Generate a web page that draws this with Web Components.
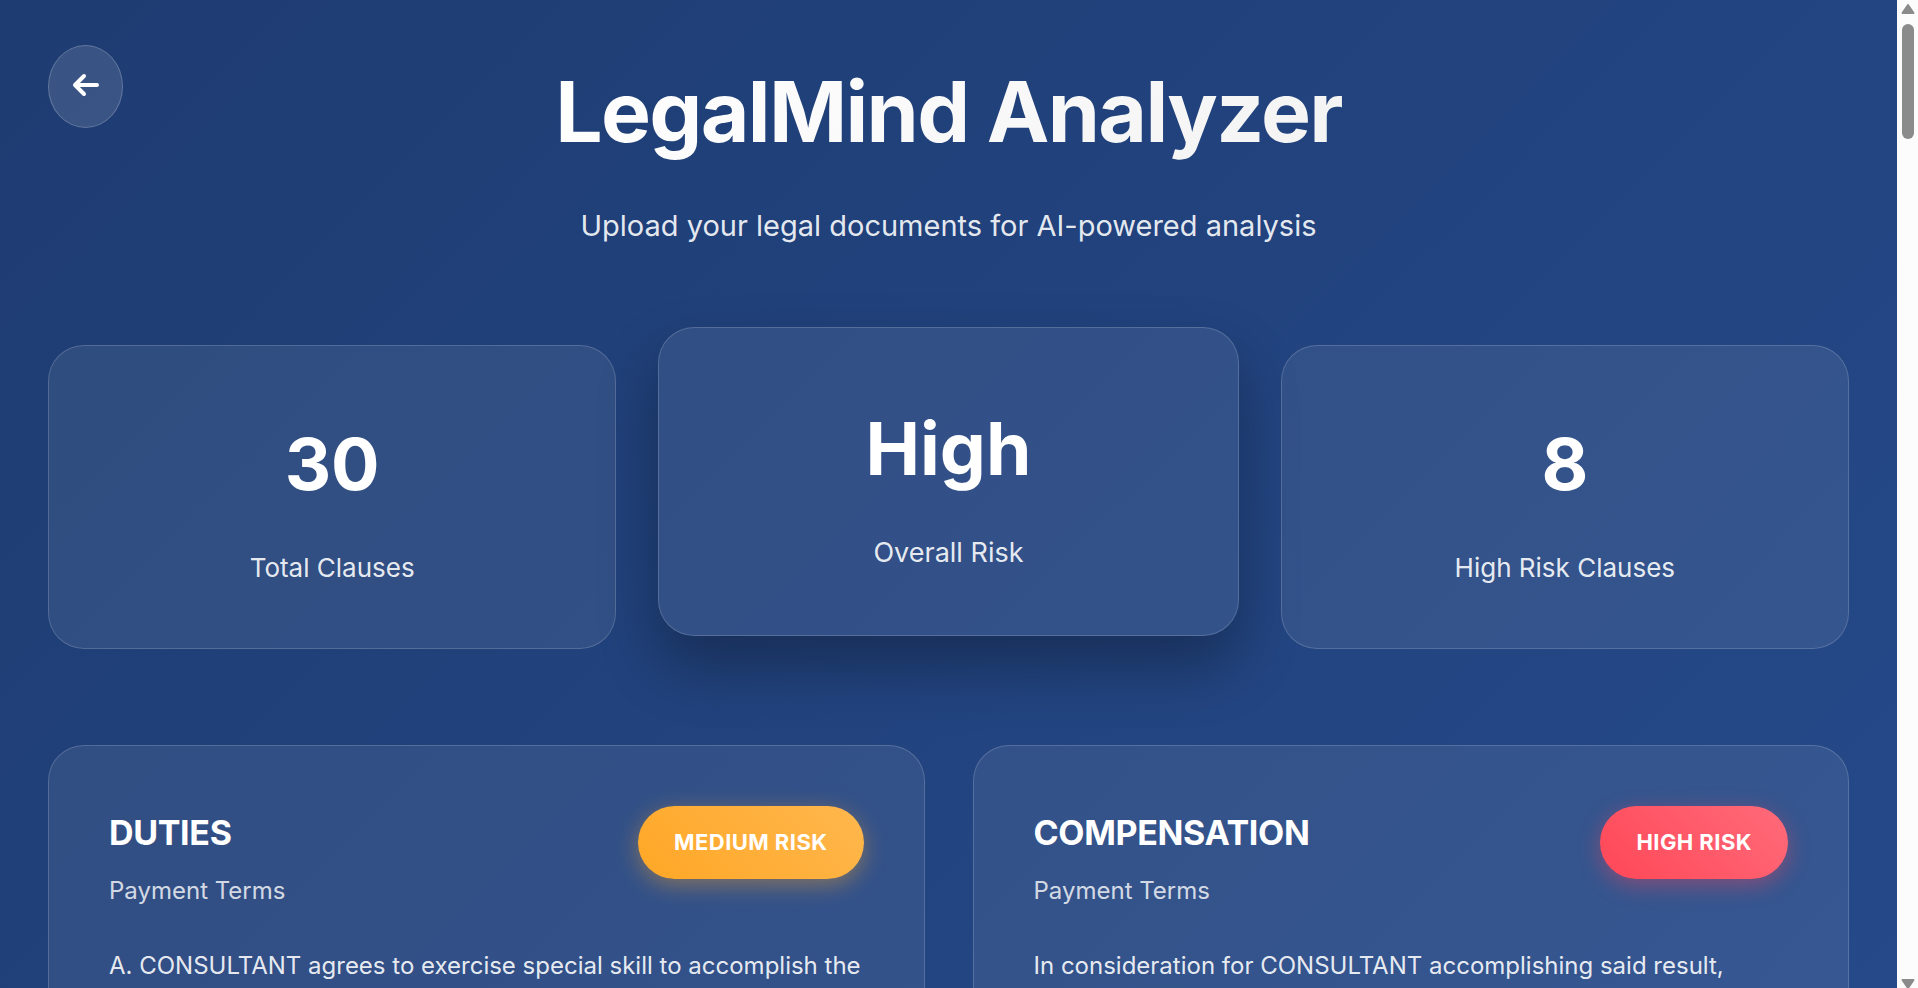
<!DOCTYPE html>
<html lang="en">
<head>
<meta charset="utf-8">
<meta name="viewport" content="width=device-width, initial-scale=1">
<title>LegalMind Analyzer</title>
<style>
  html, body { margin: 0; height: 100%; }
  body {
    font-family: Inter, "Liberation Sans", sans-serif;
    line-height: 1.6;
    color: #fff;
    overflow: hidden;
  }
</style>
</head>
<body>
<app-shell>
  <page-header heading="LegalMind Analyzer">Upload your legal documents for AI-powered analysis</page-header>
  <stat-grid>
    <stat-card value="30">Total Clauses</stat-card>
    <stat-card value="High" raised>Overall Risk</stat-card>
    <stat-card value="8">High Risk Clauses</stat-card>
  </stat-grid>
  <clause-grid>
    <clause-card heading="DUTIES" category="Payment Terms">
      <risk-badge slot="badge" level="medium">MEDIUM RISK</risk-badge>
      A. CONSULTANT agrees to exercise special skill to accomplish the
    </clause-card>
    <clause-card heading="COMPENSATION" category="Payment Terms">
      <risk-badge slot="badge" level="high">HIGH RISK</risk-badge>
      In consideration for CONSULTANT accomplishing said result,
    </clause-card>
  </clause-grid>
</app-shell>

<script>
  class BaseElement extends HTMLElement {
    connectedCallback() {
      if (this.shadowRoot) return;
      const t = document.createElement('template');
      t.innerHTML = this.constructor.markup;
      this.attachShadow({ mode: 'open' }).append(t.content.cloneNode(true));
      this.shadowRoot.querySelectorAll('[data-attr]').forEach(el => {
        el.textContent = this.getAttribute(el.dataset.attr) || '';
      });
    }
  }

  customElements.define('scroll-rail', class extends BaseElement {
    static markup = `
      <style>
        :host { display: flex; flex-direction: column; align-items: center; background: #fcfcfc; color: #8b8b8b; height: 100%; }
        svg { display: block; width: 14px; height: 12px; flex: none; }
        .up { margin-top: 3px; }
        .track { flex: 1; padding-top: 9px; }
        .thumb { width: 12px; height: 115px; border-radius: 6px; background: currentColor; }
      </style>
      <svg class="up" viewBox="0 0 14 12" aria-hidden="true"><path d="M7 2 12.500 10H1.500Z" fill="currentColor" stroke="currentColor" stroke-width="2" stroke-linejoin="round"/></svg>
      <div class="track"><div class="thumb"></div></div>
      <svg viewBox="0 0 14 12" aria-hidden="true"><path d="M1.500 4H12.500L7 12Z" fill="currentColor" stroke="currentColor" stroke-width="2" stroke-linejoin="round"/></svg>`;
  });

  customElements.define('app-shell', class extends BaseElement {
    static markup = `
      <style>
        :host { display: grid; grid-template-columns: minmax(0, 1fr) 21px; height: 100vh; }
        main {
          box-sizing: border-box;
          min-height: 0;
          padding: 45px 48px 48px;
          display: flex; flex-direction: column; gap: 96px;
          overflow-y: auto; scrollbar-width: none;
          background: linear-gradient(135deg, #1e3c72, #254989);
        }
      </style>
      <main><slot></slot></main>
      <scroll-rail></scroll-rail>`;
  });

  customElements.define('page-header', class extends BaseElement {
    static markup = `
      <style>
        :host { display: grid; grid-template-columns: 1fr auto 1fr; align-items: start; }
        button {
          box-sizing: border-box; width: 75px; height: 83px; padding: 0 0 4px;
          display: grid; place-items: center; cursor: pointer;
          color: #fff; border: 1px solid rgba(255,255,255,.2); border-radius: 50%;
          background: rgba(255,255,255,.12);
        }
        svg { width: 28px; height: 24px; display: block; }
        .titles { text-align: center; display: grid; gap: 24px; }
        h1 {
          margin: 0; font-size: 84px; line-height: 134px; font-weight: 700; letter-spacing: -0.02em;
          background: linear-gradient(135deg, #fff, #f3f3f3);
          -webkit-background-clip: text; background-clip: text; color: transparent;
        }
        p { margin: 0; font-size: 29px; line-height: 46px; color: rgba(255,255,255,.9); }
      </style>
      <button type="button" aria-label="Back">
        <svg viewBox="0 0 28 24" fill="none" stroke="currentColor" stroke-width="4" stroke-linecap="round" stroke-linejoin="round" aria-hidden="true"><path d="M25 12H4M12 3 3 12l9 9"/></svg>
      </button>
      <div class="titles">
        <h1 data-attr="heading"></h1>
        <p><slot></slot></p>
      </div>`;
  });

  customElements.define('stat-grid', class extends BaseElement {
    static markup = `
      <style>:host { display: grid; grid-template-columns: repeat(3, minmax(0, 1fr)); gap: 48px; }</style>
      <slot></slot>`;
  });

  customElements.define('stat-card', class extends BaseElement {
    static markup = `
      <style>
        :host {
          display: flex; flex-direction: column; justify-content: center; gap: 24px;
          text-align: center; padding: 60px 60px 58px;
          border: 1px solid rgba(255,255,255,.17); border-radius: 36px;
          background: rgba(255,255,255,.08);
        }
        :host([raised]) { margin: -18px -6px 13px; box-shadow: 0 30px 60px rgba(0,0,0,.3); }
        .value { font-size: 72px; line-height: 115px; font-weight: 700; }
        .label { font-size: 26px; line-height: 45px; color: rgba(255,255,255,.9); }
        :host([raised]) .value { font-size: 73px; }
        :host([raised]) .label { font-size: 27px; }
      </style>
      <div class="value" data-attr="value"></div>
      <div class="label"><slot></slot></div>`;
  });

  customElements.define('clause-grid', class extends BaseElement {
    static markup = `
      <style>:host { display: grid; grid-template-columns: repeat(2, minmax(0, 1fr)); gap: 48px; }</style>
      <slot></slot>`;
  });

  customElements.define('clause-card', class extends BaseElement {
    static markup = `
      <style>
        :host {
          display: flex; flex-direction: column; gap: 36px; padding: 60px;
          border: 1px solid rgba(255,255,255,.17); border-radius: 36px;
          background: rgba(255,255,255,.08);
        }
        header { display: flex; justify-content: space-between; align-items: flex-start; gap: 24px; }
        .names { display: grid; gap: 12px; }
        h2 { margin: 0; font-size: 34px; line-height: 54px; font-weight: 700; letter-spacing: -0.01em; }
        .category { font-size: 24px; line-height: 38px; color: rgba(255,255,255,.8); }
        p { margin: 0; font-size: 24px; line-height: 39px; color: rgba(255,255,255,.9); }
      </style>
      <header>
        <div class="names">
          <h2 data-attr="heading"></h2>
          <div class="category" data-attr="category"></div>
        </div>
        <slot name="badge"></slot>
      </header>
      <p><slot></slot></p>`;
  });

  customElements.define('risk-badge', class extends BaseElement {
    static markup = `
      <style>
        :host {
          display: block; padding: 19px 36px; border-radius: 37px; white-space: nowrap;
          font-size: 22px; line-height: 35px; font-weight: 700; letter-spacing: 0.02em;
        }
        :host([level="medium"]) { background: linear-gradient(45deg, #ffa726, #ffb74d); box-shadow: 0 6px 22px rgba(255,167,38,.4); }
        :host([level="high"]) { background: linear-gradient(45deg, #ff4757, #ff6b7a); box-shadow: 0 6px 22px rgba(255,71,87,.4); }
      </style>
      <slot></slot>`;
  });
</script>
</body>
</html>
